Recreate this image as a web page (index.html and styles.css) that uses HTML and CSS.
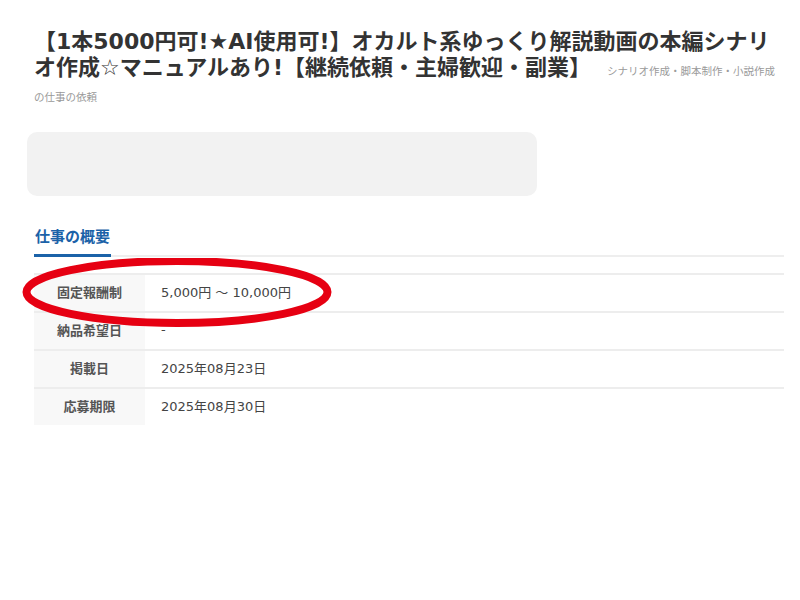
FILE: index.html
```html
<!DOCTYPE html>
<html lang="ja">
<head>
  <meta charset="UTF-8">
  <title>仕事の依頼</title>
  <meta name="viewport" content="width=device-width, initial-scale=1.0">
  <link rel="stylesheet" href="styles.css">
</head>
<body>

  <div class="page">
    <h1 class="title">【1本5000円可!★AI使用可!】オカルト系ゆっくり解説動画の本編シナリオ作成☆マニュアルあり!【継続依頼・主婦歓迎・副業】<span class="category">シナリオ作成・脚本制作・小説作成の仕事の依頼</span></h1>

    <div class="notice"></div>

    <div class="summary">
      <div class="tabs">
        <h2 class="tab">仕事の概要</h2>
      </div>

      <div class="table-wrap">
        <table class="info">
          <tr>
            <th>固定報酬制</th>
            <td>5,000円 ～ 10,000円</td>
          </tr>
          <tr>
            <th>納品希望日</th>
            <td>-</td>
          </tr>
          <tr>
            <th>掲載日</th>
            <td>2025年08月23日</td>
          </tr>
          <tr>
            <th>応募期限</th>
            <td>2025年08月30日</td>
          </tr>
        </table>

        <svg class="mark" width="312" height="72" viewBox="0 0 312 72">
          <ellipse cx="155" cy="34" rx="150.5" ry="31" fill="none" stroke="#e60012" stroke-width="8"/>
        </svg>
      </div>
    </div>
  </div>

</body>
</html>
```

FILE: styles.css
```css
body { margin: 0; background: #fff; color: #333; font-family: "DejaVu Sans", "Noto Sans CJK JP", sans-serif; }
.page { width: 757px; padding: 29px 0 0 27px; }

.title { width: 746px; margin: 0 0 0 7px; font-size: 22px; line-height: 26px; font-weight: bold; color: #333; }
.category { margin-left: 16px; font-size: 10.5px; line-height: 10px; font-weight: normal; color: #9a9a9a; }

.notice { width: 510px; height: 64px; margin-top: 25px; background: #f2f2f2; border-radius: 10px; }

.summary { margin: 30px 0 0 7px; }
.tabs { display: flex; border-bottom: 2px solid #eeeeee; }
.tab { margin: 0 0 -2px 0; padding: 0 1px 6px 1px; font-size: 15px; line-height: 22px; font-weight: bold; color: #1b62a8; border-bottom: 3px solid #1b62a8; }

.table-wrap { position: relative; margin-top: 16px; }
.info { width: 100%; border-collapse: collapse; font-size: 13px; }
.info tr { border-top: 2px solid #ededed; }
.info th { width: 111px; height: 33px; padding: 0 0 3px 0; background: #f8f8f8; color: #555; text-align: center; font-weight: bold; }
.info td { padding: 0 0 3px 16px; color: #444; text-align: left; }

.mark { position: absolute; left: -12px; top: -15px; }
```
